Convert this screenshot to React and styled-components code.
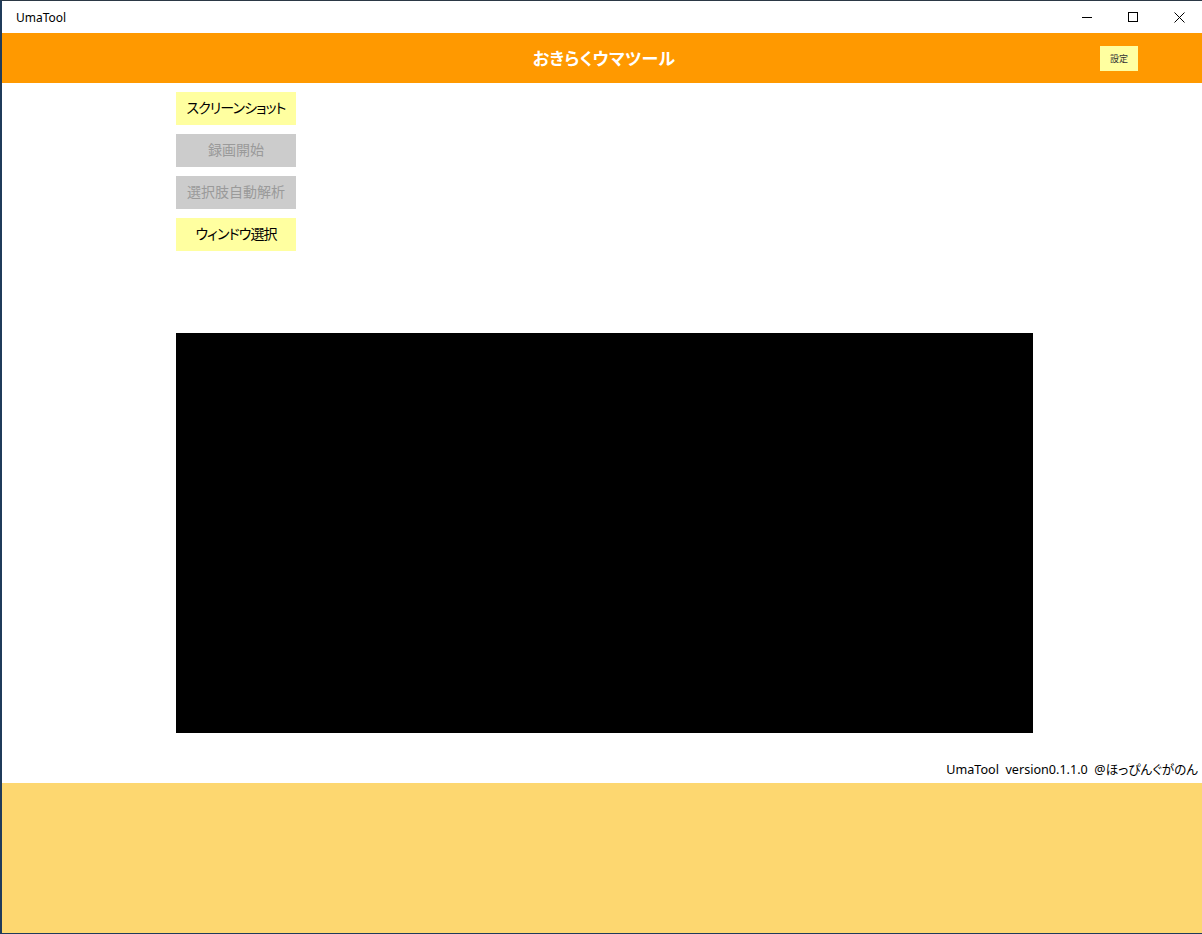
import React from 'react';
import styled, { createGlobalStyle } from 'styled-components';

const GlobalStyle = createGlobalStyle`
  html, body {
    margin: 0;
    padding: 0;
    background: #ffffff;
  }
  body {
    font-family: "Noto Sans", "Noto Sans CJK JP", sans-serif;
  }
`;

const FONT = `"Noto Sans", "Noto Sans CJK JP", sans-serif`;

const Window = styled.div`
  width: 1202px;
  height: 934px;
  box-sizing: border-box;
  border-top: 1px solid #2b3845;
  border-bottom: 1px solid #1f3b5a;
  border-left: 2px solid #1f3b5a;
  display: flex;
  flex-direction: column;
  overflow: hidden;
  font-family: ${FONT};
  font-feature-settings: "palt";
`;

const TitleBar = styled.div`
  height: 32px;
  flex: none;
  display: flex;
  align-items: center;
  justify-content: space-between;
  background: #ffffff;
`;

const WindowTitle = styled.div`
  padding-left: 14px;
  font-size: 12px;
  color: #000;
`;

const Caption = styled.div`
  display: flex;
  height: 100%;
`;

const CaptionButton = styled.div`
  width: 46px;
  height: 100%;
  display: flex;
  align-items: center;
  justify-content: center;
`;

const Header = styled.header`
  height: 50px;
  flex: none;
  background: #ff9900;
  display: grid;
  grid-template-columns: 1fr auto 1fr;
  align-items: center;
`;

const AppTitle = styled.h1`
  grid-column: 2;
  margin: 0;
  font-size: 17px;
  font-weight: 700;
  color: #ffffff;
  letter-spacing: 0.3px;
  padding-left: 4px;
  padding-bottom: 2px;
`;

const SettingsButton = styled.button`
  grid-column: 3;
  justify-self: end;
  margin-right: 64px;
  width: 38px;
  height: 25px;
  border: none;
  padding: 0;
  background: #ffffa0;
  color: #333;
  font-family: ${FONT};
  font-size: 9px;
`;

const Main = styled.main`
  flex: 1;
  display: flex;
  flex-direction: column;
  padding: 9px 0 0 174px;
`;

const ButtonColumn = styled.div`
  display: flex;
  flex-direction: column;
  gap: 9px;
  width: 120px;
`;

const ActionButton = styled.button`
  height: 33px;
  border: none;
  padding: 0 0 3px;
  background: ${(p) => (p.disabled ? '#cccccc' : '#ffffa0')};
  color: ${(p) => (p.disabled ? '#9a9a9a' : '#000000')};
  font-family: ${FONT};
  font-feature-settings: "palt";
  font-size: 14px;
  letter-spacing: ${(p) => (p.$tight ? '-0.9px' : '0')};
`;

const Preview = styled.div`
  margin-top: 82px;
  width: 857px;
  height: 400px;
  background: #000000;
`;

const Credit = styled.div`
  align-self: flex-end;
  margin-top: 26px;
  padding-right: 4px;
  font-size: 12.6px;
  color: #000;
  white-space: pre;
`;

const Footer = styled.footer`
  height: 150px;
  flex: none;
  background: #fdd770;
`;

const MinIcon = () => (
  <svg width="10" height="10" viewBox="0 0 10 10">
    <path d="M0 5.5h10" stroke="#000" strokeWidth="1" />
  </svg>
);

const MaxIcon = () => (
  <svg width="10" height="10" viewBox="0 0 10 10">
    <rect x="0.5" y="0.5" width="9" height="9" fill="none" stroke="#000" strokeWidth="1" />
  </svg>
);

const CloseIcon = () => (
  <svg width="11" height="11" viewBox="0 0 11 11">
    <path d="M0.5 0.5l10 10M10.5 0.5l-10 10" stroke="#000" strokeWidth="1" />
  </svg>
);

const actions = [
  { label: 'スクリーンショット', disabled: false, tight: true },
  { label: '録画開始', disabled: true },
  { label: '選択肢自動解析', disabled: true },
  { label: 'ウィンドウ選択', disabled: false, tight: true },
];

export default function App() {
  return (
    <>
      <GlobalStyle />
      <Window>
        <TitleBar>
          <WindowTitle>UmaTool</WindowTitle>
          <Caption>
            <CaptionButton><MinIcon /></CaptionButton>
            <CaptionButton><MaxIcon /></CaptionButton>
            <CaptionButton><CloseIcon /></CaptionButton>
          </Caption>
        </TitleBar>
        <Header>
          <AppTitle>おきらくウマツール</AppTitle>
          <SettingsButton>設定</SettingsButton>
        </Header>
        <Main>
          <ButtonColumn>
            {actions.map((a) => (
              <ActionButton key={a.label} disabled={a.disabled} $tight={a.tight}>
                {a.label}
              </ActionButton>
            ))}
          </ButtonColumn>
          <Preview />
          <Credit>{'UmaTool  version0.1.1.0  @ほっぴんぐがのん'}</Credit>
        </Main>
        <Footer />
      </Window>
    </>
  );
}
